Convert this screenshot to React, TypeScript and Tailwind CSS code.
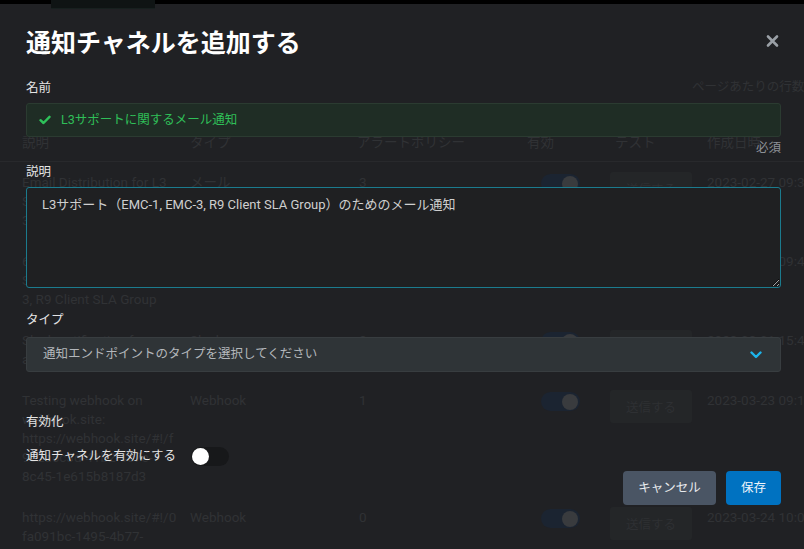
import React from 'react';

type Row = {
  desc: string[];
  type: string;
  policies: string;
  date: string;
};

const rows: Row[] = [
  {
    desc: ['Email Distribution for L3', 'Support (EMC-1, EMC-', '3, R9 Client SLA Group)'],
    type: 'メール',
    policies: '3',
    date: '2023-02-27 09:31',
  },
  {
    desc: ['6 Email Distribution for', 'Support (EMC-1, EMC-', '3, R9 Client SLA Group'],
    type: 'メール',
    policies: '3',
    date: '2023-02-27 09:42',
  },
  {
    desc: ['Slack notification for', 'alerts'],
    type: 'Slack',
    policies: '2',
    date: '2023-03-01 15:40',
  },
  {
    desc: ['Testing webhook on', 'webhook.site:', 'https://webhook.site/#!/f', '9e2a6c3d-41b2-4c7e-', '8c45-1e615b8187d3'],
    type: 'Webhook',
    policies: '1',
    date: '2023-03-23 09:12',
  },
  {
    desc: ['https://webhook.site/#!/0', 'fa091bc-1495-4b77-', '9d3e-6a1f0c2b4e57'],
    type: 'Webhook',
    policies: '0',
    date: '2023-03-24 10:05',
  },
];

const faint = 'text-[#303235]';

function FaintToggle() {
  return (
    <div className="w-[39px] h-[19px] rounded-full bg-[#1b2431] flex items-center justify-end pr-[2px]">
      <div className="w-[16px] h-[16px] rounded-full bg-[#393b3e]" />
    </div>
  );
}

function BackgroundPage() {
  return (
    <div className="font-['Roboto','Noto_Sans_CJK_JP',sans-serif] text-[13.5px]">
      <div className="h-[4px] bg-black">
        <div className="ml-[51px] w-[104px] h-[9px] bg-[#0f1414] border-b border-[#17201f]" />
      </div>
      <div className={`mt-[74px] h-[18px] pl-[692px] whitespace-nowrap leading-[18px] text-[12.5px] ${faint}`}>
        ページあたりの行数
      </div>
      <div className={`mt-[28px] flex py-[9px] leading-[19px] whitespace-nowrap border-b border-[#28292c] ${faint}`}>
        <div className="w-[190px] shrink-0 pl-[22px]">説明</div>
        <div className="w-[167px] shrink-0">タイプ</div>
        <div className="w-[170px] shrink-0">アラートポリシー</div>
        <div className="w-[88px] shrink-0">有効</div>
        <div className="w-[92px] shrink-0">テスト</div>
        <div className="shrink-0">作成日時</div>
      </div>
      {rows.map((r, i) => (
        <div key={i} className={`flex py-[11px] leading-[19px] whitespace-nowrap ${faint}`}>
          <div className="w-[190px] shrink-0 pl-[22px]">
            {r.desc.map((d, j) => (
              <div key={j}>{d}</div>
            ))}
          </div>
          <div className="w-[167px] shrink-0">{r.type}</div>
          <div className="w-[170px] shrink-0 pl-[2px]">{r.policies}</div>
          <div className="w-[83px] shrink-0 pl-[14px] pt-[1px]">
            <FaintToggle />
          </div>
          <div className="w-[97px] shrink-0">
            <div className="w-[82px] h-[33px] -mt-[1px] rounded-[3px] bg-[#242628] flex items-center justify-center text-[#2e3033] font-['Noto_Sans_CJK_JP',sans-serif] text-[12.5px]">
              送信する
            </div>
          </div>
          <div className="shrink-0">{r.date}</div>
        </div>
      ))}
    </div>
  );
}

export default function App() {
  return (
    <div className="relative w-[804px] h-[549px] overflow-hidden bg-[#202124]">
      <BackgroundPage />

      <div className="absolute inset-0 pt-[25px] pl-[26px] pr-[23px] font-['Roboto','Noto_Sans_CJK_JP',sans-serif] text-[12.5px] text-[#e4e4e4]">
        <div className="flex items-center justify-between h-[32px]">
          <h2 className="text-[25px] font-bold leading-[32px] text-white font-['Noto_Sans_CJK_JP',sans-serif]">通知チャネルを追加する</h2>
          <button type="button" className="mr-[2px] text-[#9aa0a6]">
            <svg width="13" height="14" viewBox="0 0 13 14" fill="none" stroke="currentColor" strokeWidth="2.6" strokeLinecap="round">
              <path d="M2 2.5L11 11.5M11 2.5L2 11.5" />
            </svg>
          </button>
        </div>

        <div className="mt-[22px] h-[18px] leading-[18px]">名前</div>
        <div className="mt-[6px] h-[34px] rounded-[3px] border border-[#2b3b31] bg-[#1f2d25] flex items-center pl-[12px] gap-[10px] text-[#2fbf58]">
          <svg width="12" height="10" viewBox="0 0 12 10" fill="none" stroke="#2ec25a" strokeWidth="2.4" strokeLinecap="round" strokeLinejoin="round">
            <path d="M1.5 5.2L4.5 8L10.5 1.8" />
          </svg>
          <span>L3サポートに関するメール通知</span>
        </div>

        <div className="mt-[2px] h-[18px] leading-[18px] text-right text-[#8d9197]">必須</div>

        <div className="mt-[6px] h-[18px] leading-[18px]">説明</div>
        <textarea
          className="mt-[6px] block w-full h-[101px] rounded-[3px] border border-[#1b7b8e] bg-[#1f2022] pl-[15px] pt-[8px] text-[13px] leading-[18px] text-[#cfcfcf] outline-none"
          defaultValue="L3サポート（EMC-1, EMC-3, R9 Client SLA Group）のためのメール通知"
        />

        <div className="mt-[23px] h-[18px] leading-[18px]">タイプ</div>
        <div className="mt-[8px] h-[35px] rounded-[3px] border border-[#383d40] bg-[#2f3437] flex items-center justify-between pl-[16px] pr-[18px] text-[#b3b7bb]">
          <span>通知エンドポイントのタイプを選択してください</span>
          <svg width="12" height="8" viewBox="0 0 12 8" fill="none" stroke="#1db4ea" strokeWidth="2.4" strokeLinecap="round" strokeLinejoin="round">
            <path d="M1.5 1.5L6 6L10.5 1.5" />
          </svg>
        </div>

        <div className="mt-[41px] h-[18px] leading-[18px]">有効化</div>
        <div className="mt-[15px] h-[20px] flex items-center gap-[15px]">
          <span>通知チャネルを有効にする</span>
          <div className="w-[38px] h-[19px] rounded-full bg-[#17181a] flex items-center pl-[1px]">
            <div className="w-[17px] h-[17px] rounded-full bg-white" />
          </div>
        </div>

        <div className="mt-[5px] flex justify-end gap-[10px]">
          <button type="button" className="h-[34px] w-[93px] rounded-[4px] bg-[#4a5564] text-[#e8eaed]">
            キャンセル
          </button>
          <button type="button" className="h-[34px] w-[55px] rounded-[4px] bg-[#0072c1] text-[#eef4fa]">
            保存
          </button>
        </div>
      </div>
    </div>
  );
}
